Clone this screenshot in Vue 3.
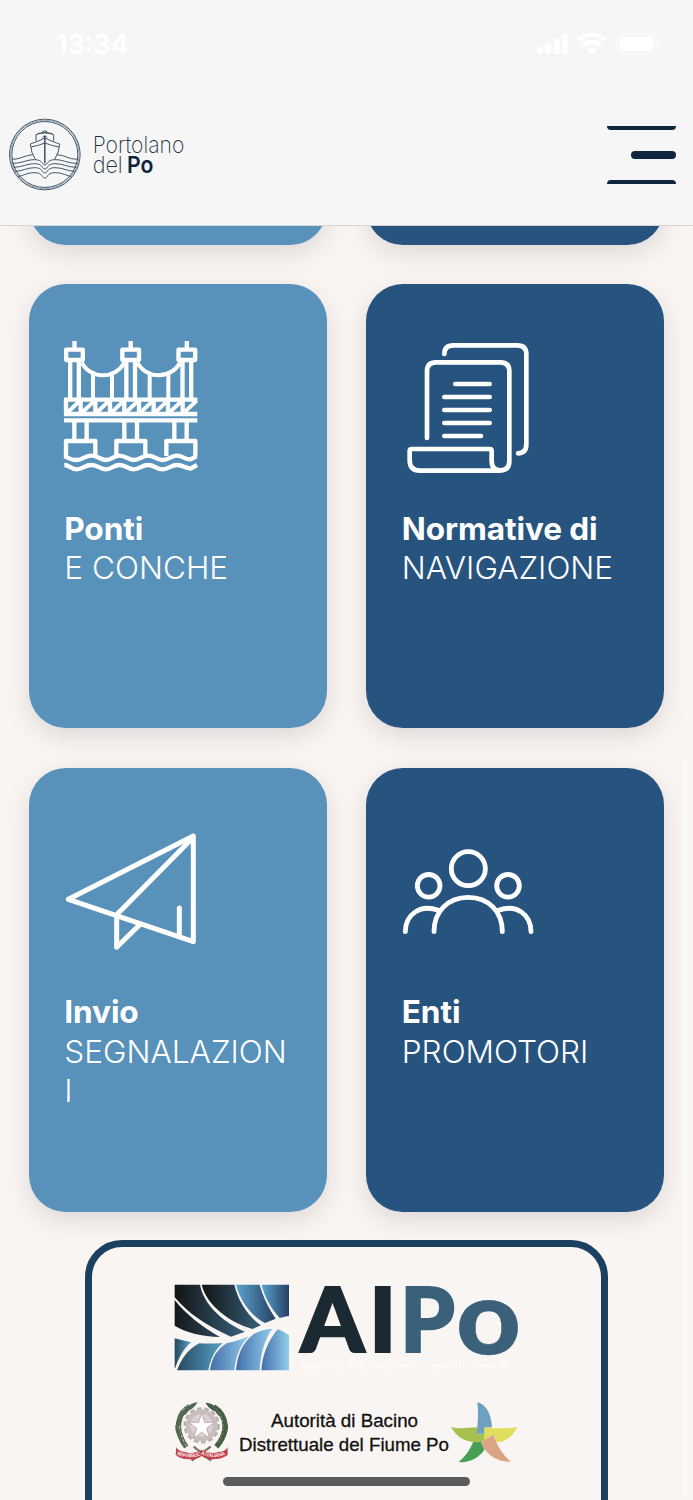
<script setup>
const cards = [
  { id: "prev-left", tone: "light" },
  { id: "prev-right", tone: "dark" },
  { id: "ponti", tone: "light", title: "Ponti", subtitle: "E CONCHE", viewBox: "42 30 399 399" },
  { id: "normative", tone: "dark", title: "Normative di", subtitle: "NAVIGAZIONE", viewBox: "21 30 399 399" },
  { id: "invio", tone: "light", title: "Invio", subtitle: "SEGNALAZIONI", viewBox: "42 11 399 399" },
  { id: "enti", tone: "dark", title: "Enti", subtitle: "PROMOTORI", viewBox: "36 -34 399 399" },
];

// left edge, right edge and height of each wave under the ship
const waves = [
  [36, 231, 491],
  [39, 228, 503],
  [44, 223, 515],
  [54, 213, 530],
];

const wavePath = ([left, right, y]) =>
  `M${left} ${y}C66 ${y} 78 ${y - 11} 103 ${y - 11}S124 ${y + 5} 133.5 ${y + 5}S139 ${y - 11} 164 ${y - 11}S201 ${y} ${right} ${y}`;
</script>

<template>
  <div class="screen">
    <header class="header">
      <div class="status">
        <span class="time">13:34</span>
        <svg class="status-icons" viewBox="110 96 372 70">
          <rect x="110" y="140" width="17" height="22" rx="5" />
          <rect x="135" y="128" width="18" height="34" rx="5" />
          <rect x="161" y="115" width="17" height="47" rx="5" />
          <rect x="186" y="101" width="16" height="61" rx="5" />
          <path d="M235 119Q275 88 315 119M248 136Q275 114 302 136" fill="none" stroke="#fff" stroke-width="12" />
          <path d="M260 150Q275 136 290 150L275 163Z" />
          <rect x="350" y="102" width="118" height="61" rx="17" fill="none" stroke="#fbfbfb" stroke-width="4" />
          <rect x="357" y="110" width="102" height="44" rx="10" />
          <path d="M474 123q6 9 0 18z" fill="#fbfbfb" />
        </svg>
      </div>
      <div class="nav">
        <svg class="brand" viewBox="26 355 530 220">
          <g fill="none" stroke="#33495f" stroke-width="2.8" stroke-linejoin="round">
            <circle cx="133.500" cy="464.500" r="106" />
            <circle cx="133.500" cy="464.500" r="103" stroke="#8c9aa8" />
            <circle cx="133.500" cy="464.500" r="99" />
            <path d="M133.500 409V491" stroke="#23395c" stroke-width="4" />
            <path d="M105 479Q92 460 90 433Q112 426 133.500 415Q155 426 178 433Q176 460 163 479" />
            <path d="M92 442Q115 438 133.500 430Q153 438 176 442M107 424V405Q133 394 160 405V424M112 402Q133 395 156 402M126 397Q133 389 141 397M127 414Q133 403 140 414" />
            <path d="M36 479C62 479 74 466 97 465M231 479C205 479 193 466 170 465" />
            <path v-for="wave in waves" :key="wave[2]" :d="wavePath(wave)" />
          </g>
          <g class="brand-text">
            <text x="277" y="460" textLength="275" lengthAdjust="spacingAndGlyphs">Portolano</text>
            <text x="277" y="521" textLength="90" lengthAdjust="spacingAndGlyphs">del</text>
            <text x="380" y="521" textLength="79" lengthAdjust="spacingAndGlyphs" class="brand-strong">Po</text>
          </g>
        </svg>
        <div class="menu">
          <span class="bar bar-top"></span>
          <span class="bar bar-mid"></span>
          <span class="bar bar-bottom"></span>
        </div>
      </div>
    </header>

    <main class="content">
      <div class="grid">
        <article v-for="card in cards" :key="card.id" class="card" :class="card.tone">
          <template v-if="card.title">
            <svg class="icon" :viewBox="card.viewBox">
              <g v-if="card.id === 'ponti'" stroke-width="13" stroke-linejoin="round">
                <g v-for="x in [73.5, 242, 410.5]" :key="x">
                  <path :d="`M${x} 33V55`" />
                  <rect :x="x - 25" y="59" width="50" height="31" />
                  <path :d="`M${x - 13} 92V205M${x + 13} 92V205`" />
                </g>
                <path d="M95 98C125 148 193 148 223 98M262 98C292 148 360 148 391 98M129 132V205M186 132V205M299 132V205M355 132V205" stroke-width="12" />
                <path d="M42 209H442M42 252H442" stroke-linejoin="miter" />
                <path d="M48 209V252M92 209V252M136 209V252M180 209V252M223 209V252M267 209V252M311 209V252M354 209V252M398 209V252" />
                <path d="M54 246L90 212M98 246L134 212M142 246L178 212M186 246L222 212M229 246L265 212M273 246L309 212M317 246L353 212M360 246L396 212M404 246L440 212" stroke-width="12" />
                <path d="M42 271H442" />
                <path d="M73 273V330M110 273V330M223 273V330M261 273V330M373 273V330M410 273V330" />
                <path d="M48 378V333H136V378M199 378V333H286V378M349 378V333H436V378" />
                <path d="M43 378C60 386 65 391 80 390C99 389 104 377 124 377C145 377 151 390 168 390C185 390 191 377 209 377C227 377 235 390 251 390C269 390 276 377 294 377C313 377 320 390 338 390C356 390 363 377 381 377C399 377 405 390 422 388L440 378" />
                <path d="M43 405C57 405 65 418 80 418C99 418 104 405 124 405C145 405 151 418 168 418C185 418 191 405 209 405C227 405 235 418 251 418C269 418 276 405 294 405C313 405 320 418 338 418C356 418 363 405 381 405C399 405 409 416 422 416L441 405" />
              </g>
              <g v-else-if="card.id === 'normative'" stroke-width="14" stroke-linecap="round" stroke-linejoin="round">
                <path d="M148 72Q148 46 175 46H367Q394 46 394 73V343Q394 370 369 370" />
                <path d="M96 324V124Q96 97 123 97H316Q343 97 343 124V393Q343 421 316 421Q290 421 290 393V363Q290 357 284 357H50Q44 357 44 363V391Q44 422 75 422H316" />
                <path d="M181 162H284M148 201H284M148 240H284M148 279H284M148 318H258" />
              </g>
              <g v-else-if="card.id === 'invio'" stroke-width="15" stroke-linecap="round" stroke-linejoin="round">
                <path d="M430 47L55 237L430 364ZM430 51L200 283V381L269 313M388 263V344" />
              </g>
              <g v-else stroke-width="14.500" stroke-linecap="round">
                <circle cx="235" cy="100" r="51" />
                <circle cx="116" cy="151.500" r="34" />
                <circle cx="354" cy="151.500" r="34" />
                <path d="M132 289C132 228 174 186 235 186C295 186 337 228 337 289M46 289C46 238 90 205 145 225M325 225C380 205 423 238 423 289" />
              </g>
            </svg>
            <h2 class="title">{{ card.title }}</h2>
            <p class="subtitle">{{ card.subtitle }}</p>
          </template>
        </article>
      </div>

      <section class="partners">
        <svg class="aipo" viewBox="175 1284 344 90">
          <defs>
            <linearGradient id="g1"><stop stop-color="#15171a" /><stop offset="1" stop-color="#2c485b" /></linearGradient>
            <linearGradient id="g2"><stop stop-color="#141414" /><stop offset="1" stop-color="#36607b" /></linearGradient>
            <linearGradient id="g3"><stop stop-color="#5ba2d0" /><stop offset="1" stop-color="#254063" /></linearGradient>
            <linearGradient id="g4"><stop stop-color="#28495f" /><stop offset="1" stop-color="#55a0c6" /></linearGradient>
            <linearGradient id="g5"><stop stop-color="#446fab" /><stop offset="1" stop-color="#90cdeb" /></linearGradient>
          </defs>
          <g transform="translate(165 1275) scale(.33333)">
            <path fill="url(#g1)" d="M29 75C60 115 110 155 165 186C110 184 60 172 29 152Z" />
            <path fill="url(#g2)" d="M29 29H105C115 85 170 140 240 170L198 185C120 150 70 115 29 67Z" />
            <path fill="url(#g2)" d="M110 29H208C220 80 250 125 288 151L262 162C190 140 125 90 110 29Z" />
            <path fill="url(#g3)" d="M213 29H284C295 70 315 105 332 131L300 144C255 120 225 75 213 29Z" />
            <path fill="url(#g3)" d="M290 29H372V122L344 129C318 100 298 65 290 29Z" />
            <path fill="url(#g4)" d="M29 190L78 202C55 222 42 248 31 278L29 280Z" />
            <path fill="url(#g4)" d="M36 286C50 250 70 222 103 205Q140 207 173 204C150 225 137 250 130 286Z" />
            <path fill="url(#g5)" d="M135 286C140 245 160 220 186 204Q225 197 252 183C225 210 212 245 208 286Z" />
            <path fill="url(#g5)" d="M213 286C217 240 232 205 265 178Q292 162 322 161C298 195 287 235 284 286Z" />
            <path fill="url(#g5)" d="M289 286C292 240 308 200 338 163Q355 168 372 180V286Z" />
          </g>
          <g class="aipo-text">
            <text x="300.500" y="1352" textLength="64" lengthAdjust="spacingAndGlyphs">A</text>
            <text x="369" y="1352" textLength="27.500" lengthAdjust="spacingAndGlyphs">I</text>
            <text x="400" y="1352" textLength="55" lengthAdjust="spacingAndGlyphs" class="steel">P</text>
            <text x="456" y="1353.500" textLength="65" lengthAdjust="spacingAndGlyphs" class="steel aipo-o">o</text>
          </g>
          <text x="299" y="1370" textLength="216" class="agency">Agenzia Interregionale per il fiume Po</text>
        </svg>

        <svg class="authority" viewBox="175 1400 344 66">
          <g transform="translate(165 1390) scale(.33333)">
            <path d="M80 212L137 170M138 212L86 170" stroke="#84745f" stroke-width="7" />
            <circle cx="110" cy="106" r="50" fill="none" stroke="#b9b1b0" stroke-width="9" stroke-dasharray="14 8" />
            <circle cx="110" cy="106" r="48" fill="#c6bfbe" />
            <circle cx="110" cy="106" r="34" fill="#d9d3d3" />
            <path d="M74 50C38 68 26 120 64 171" fill="none" stroke="#596b57" stroke-width="16" />
            <path d="M68 45C35 68 35 130 66 169" fill="none" stroke="#c5bda8" stroke-width="3" stroke-dasharray="9 5" />
            <path d="M98 37C86 37 67 46 56 66Q82 64 98 37ZM75 53Q48 55 42 82Q67 77 75 53ZM48 78Q32 91 32 114Q53 104 48 78ZM31 105Q29 130 45 145Q53 123 31 105Z" fill="#526753" />
            <path d="M121 38C137 37 154 48 163 65Q138 66 121 38ZM145 50Q171 55 178 83Q154 80 145 50ZM171 76Q189 89 188 116Q168 104 171 76ZM189 106Q190 132 174 148Q166 126 189 106Z" fill="#405c43" />
            <path d="M146 50C190 78 190 130 154 170" fill="none" stroke="#455f47" stroke-width="16" />
            <path d="M152 56C182 86 181 130 157 163" fill="none" stroke="#7f8763" stroke-width="3" stroke-dasharray="8 5" />
            <path d="M110 68L119 97H149L125 115L134 145L110 127L86 145L95 115L71 97H101Z" fill="#fff" stroke="#c79aa3" stroke-width="2.500" />
            <path d="M34 171Q40 184 60 186Q86 194 110 180Q135 194 161 186Q183 184 188 171L188 195Q168 208 151 207Q128 212 110 197Q92 212 66 207Q48 208 32 194Z" fill="#c2404c" />
            <path id="ribbon" d="M35 194Q72 210 110 194Q149 210 187 192" fill="none" />
            <text class="ribbon"><textPath href="#ribbon" textLength="150">REPVBBLICA ITALIANA</textPath></text>
          </g>
          <text x="271" y="1427" textLength="147" lengthAdjust="spacingAndGlyphs" class="authority-text">Autorità di Bacino</text>
          <text x="239" y="1451" textLength="210" lengthAdjust="spacingAndGlyphs" class="authority-text">Distrettuale del Fiume Po</text>
          <g transform="translate(340 1390) scale(.33333)">
            <path fill="#479f56" d="M400 155Q415 158 424 152L433 180C415 205 385 220 356 216C380 195 388 180 400 155Z" />
            <path fill="#a6c150" d="M333 110C360 120 380 112 411 112V131H434V150Q415 158 400 156C370 152 350 140 333 110Z" />
            <path fill="#e0df5d" d="M433 111C470 115 500 118 532 110C520 140 490 160 468 155L461 134L433 150Z" />
            <path fill="#6f9fc1" d="M412 37C445 45 455 85 456 112H433V131H410C413 110 416 70 412 37Z" />
            <path fill="#dba585" d="M422 156L461 134C470 165 485 190 512 215C470 218 435 190 422 156Z" />
          </g>
        </svg>
      </section>
    </main>

    <div class="scrollbar"></div>
    <div class="home-indicator"></div>
  </div>
</template>

<style>
body {
  margin: 0;
  background: #f9f5f2;
}
</style>

<style scoped>
.screen {
  position: relative;
  display: flex;
  flex-direction: column;
  height: 1500px;
  overflow: hidden;
  background: #f9f5f2;
  font-family: Inter, "Liberation Sans", sans-serif;
}

.header {
  box-sizing: border-box;
  flex: none;
  height: 226px;
  z-index: 1;
  background: #f6f6f6;
  border-bottom: 1px solid #d5d7d8;
}

.status {
  display: flex;
  justify-content: space-between;
  align-items: center;
  box-sizing: border-box;
  height: 88px;
  padding: 0 32px 0 56px;
  color: #fff;
}

.time {
  font-size: 27px;
  font-weight: 600;
}

.status-icons {
  width: 124px;
  height: 23.33px;
  fill: #fff;
}

.nav {
  display: flex;
  justify-content: space-between;
  align-items: center;
  height: 134px;
  padding: 0 17.5px 0 8.67px;
}

.brand {
  width: 176.67px;
  height: 73.33px;
}

.brand-text {
  font-size: 69px;
  font-weight: 200;
  fill: #1d3248;
}

.brand-strong {
  font-weight: 600;
  fill: #10253f;
}

.menu {
  display: flex;
  flex-direction: column;
  align-items: flex-end;
  justify-content: space-between;
  width: 68.5px;
  height: 57.5px;
}

.bar {
  width: 100%;
  height: 4px;
  background: #10263f;
}

.bar-top {
  border-radius: 0 0 4px 4px;
}

.bar-mid {
  width: 45px;
  height: 7.5px;
  border-radius: 4px;
}

.bar-bottom {
  border-radius: 4px 4px 0 0;
}

.content {
  flex: 1;
  min-height: 0;
  overflow: hidden;
}

.grid {
  display: grid;
  grid-template-columns: 298px 298px;
  grid-auto-rows: 444px;
  gap: 39.5px;
  margin: -425.4px 0 0 28.75px;
}

.card {
  box-sizing: border-box;
  padding: 55.9px 35px 0 35.5px;
  border-radius: 37px;
  color: #fff;
  box-shadow: 0 8px 24px rgba(40, 30, 50, 0.13);
}

.light {
  background: #5892bb;
}

.dark {
  background: #27547f;
}

.icon {
  display: block;
  width: 133px;
  height: 133px;
  overflow: visible;
  fill: none;
  stroke: #fff;
}

.title,
.subtitle {
  margin: 0;
  font-size: 31.6px;
  line-height: 39.5px;
}

.title {
  margin-top: 35.6px;
  font-weight: 700;
  letter-spacing: -0.1px;
  white-space: nowrap;
}

.subtitle {
  font-weight: 300;
  word-break: break-all;
}

.partners {
  display: flex;
  flex-direction: column;
  align-items: center;
  gap: 26px;
  box-sizing: border-box;
  width: 523px;
  height: 400px;
  margin: 28.4px auto 0;
  padding-top: 37px;
  border: 7.5px solid #1b4060;
  border-radius: 37px;
}

.aipo {
  flex: none;
  width: 344px;
  height: 90px;
  overflow: visible;
}

.aipo-text {
  font-family: Lato, sans-serif;
  font-size: 89px;
  font-weight: 900;
  fill: #1b2933;
  stroke: #1b2933;
  stroke-width: 2px;
}

.aipo-text .steel {
  fill: #3b607a;
  stroke: #3b607a;
}

.aipo-text .aipo-o {
  font-size: 103px;
  stroke-width: 0.5px;
}

.agency {
  font-family: Lato, sans-serif;
  font-size: 12px;
  fill: #fdfcfb;
}

.authority {
  flex: none;
  width: 344px;
  height: 66px;
}

.authority-text {
  font-family: "Liberation Sans", Arial, sans-serif;
  font-size: 18.5px;
  fill: #111;
  stroke: #111;
  stroke-width: 0.3px;
}

.ribbon {
  font-size: 15px;
  font-weight: 700;
  fill: #f4dede;
}

.scrollbar {
  position: absolute;
  top: 760px;
  right: 5px;
  width: 6px;
  height: 735px;
  border-radius: 3px;
  background: #fcfaf8;
}

.home-indicator {
  position: absolute;
  left: 223px;
  bottom: 14px;
  width: 247px;
  height: 9.5px;
  border-radius: 5px;
  background: #5b5b5b;
}
</style>
